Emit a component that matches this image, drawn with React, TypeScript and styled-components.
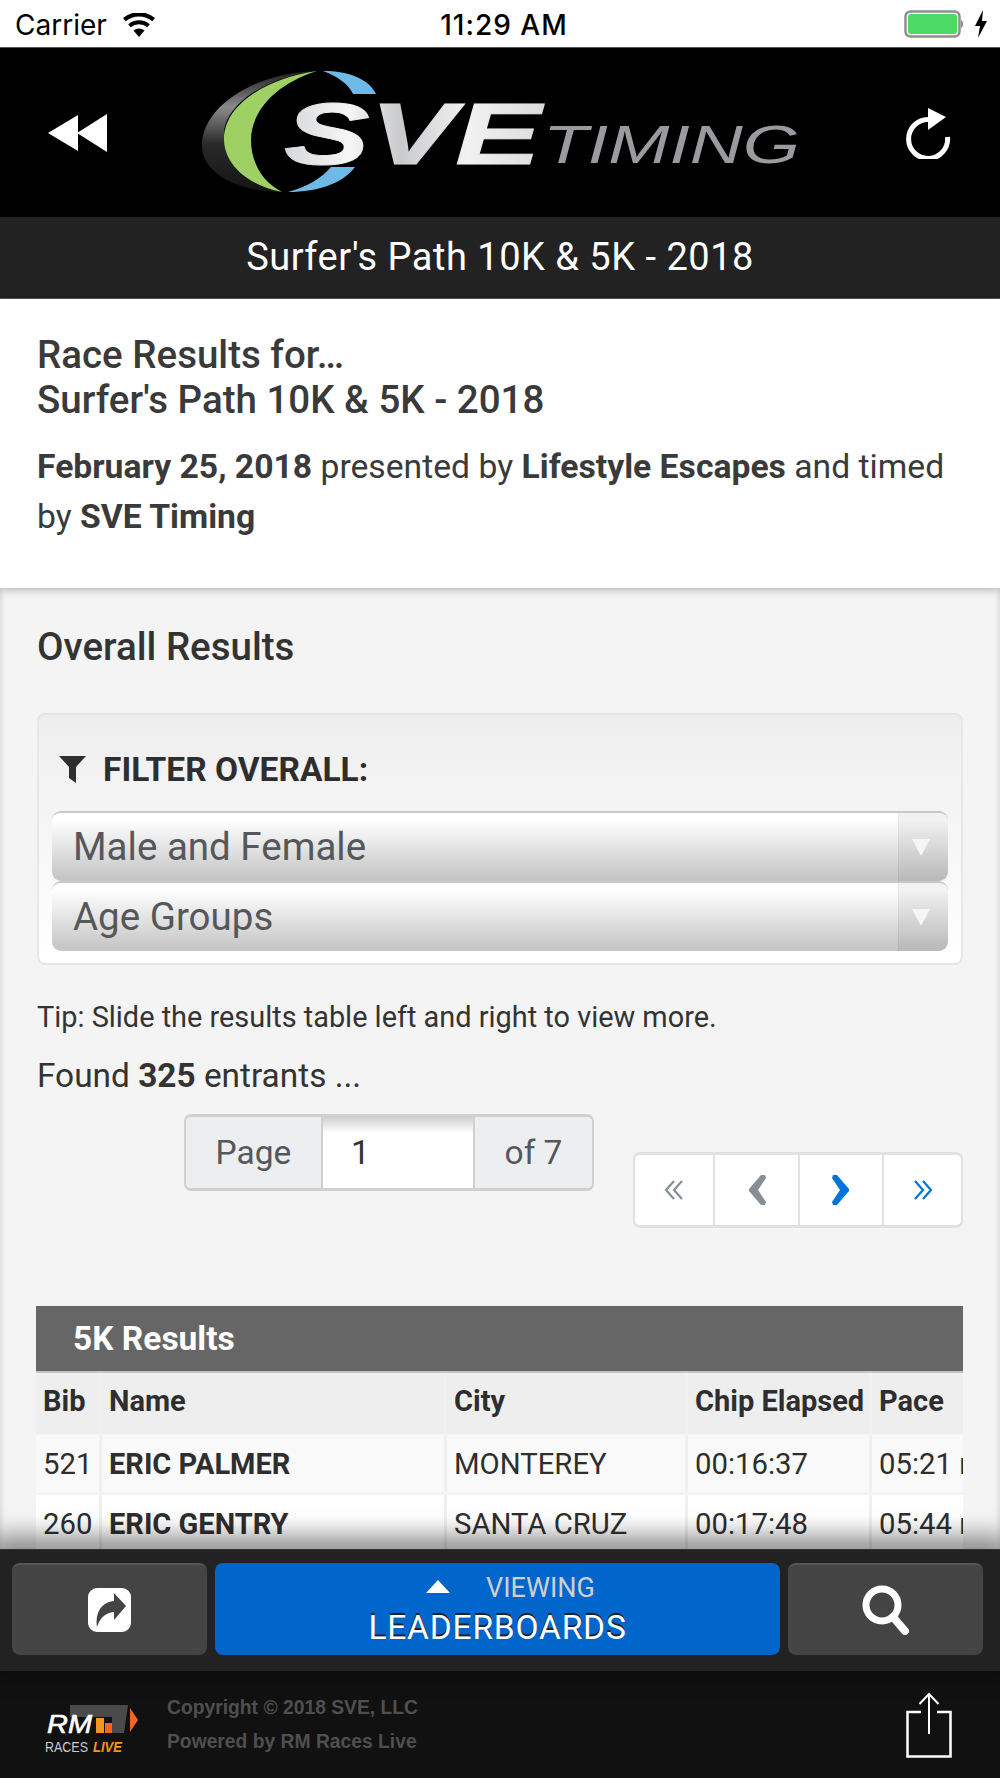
import { FC } from 'react';
import styled, { createGlobalStyle } from 'styled-components';

const GlobalStyle = createGlobalStyle`
  html, body {
    margin: 0;
    padding: 0;
    background: #f4f4f4;
  }
  * {
    box-sizing: border-box;
  }
`;

const Screen = styled.div`
  width: 1000px;
  height: 1778px;
  display: flex;
  flex-direction: column;
  overflow: hidden;
  font-family: Roboto, 'Liberation Sans', sans-serif;
  color: #333;
`;

// status bar
const StatusBar = styled.div`
  height: 48px;
  flex: none;
  display: grid;
  grid-template-columns: 1fr auto 1fr;
  align-items: center;
  padding: 3px 12px 0 15px;
  background: #fff;
  border-bottom: 1px solid #555;
  color: #000;
  font-family: Inter, Roboto, sans-serif;
  font-size: 28px;
  line-height: 30px;
`;

const StatusLeft = styled.div`
  display: flex;
  align-items: center;
  gap: 15px;
`;

const StatusTime = styled.div`
  font-weight: 500;
  letter-spacing: 1px;
  padding-left: 5px;
`;

const StatusRight = styled.div`
  display: flex;
  align-items: center;
  justify-content: flex-end;
  gap: 11px;
  margin-top: -3px;
`;

// header
const Header = styled.div`
  height: 169px;
  flex: none;
  display: flex;
  align-items: center;
  justify-content: space-between;
  padding: 0 48px 0 48px;
  background: #000;
`;

const HeaderLogo = styled.svg`
  margin: 0 15px 2px 0;
`;

const TitleBar = styled.div`
  height: 82px;
  flex: none;
  display: flex;
  align-items: center;
  justify-content: center;
  padding-bottom: 2px;
  background: #222;
  border-bottom: 1px solid #555;
  color: #fff;
  font-size: 38px;
  letter-spacing: 0.5px;
`;

// intro
const Intro = styled.div`
  height: 289px;
  flex: none;
  padding: 33px 37px 0;
  background: #fff;
  box-shadow: 0 2px 8px rgba(0, 0, 0, 0.25);
  position: relative;
`;

const IntroTitle = styled.h1`
  margin: 0;
  font-size: 38.5px;
  line-height: 45px;
  font-weight: 500;
  color: #3a3a3a;
`;

const IntroText = styled.p`
  margin: 20px 0 0;
  font-size: 33.7px;
  line-height: 50px;
  color: #3a3a3a;

  b {
    font-weight: 700;
  }
`;

// main
const Main = styled.div`
  flex: 1;
  min-height: 0;
  overflow: hidden;
  padding: 36px 37px 0 37px;
  background: #f4f4f4;
  box-shadow: inset 4px 0 4px -2px rgba(0, 0, 0, 0.1), inset -4px 0 4px -2px rgba(0, 0, 0, 0.1);
`;

const SectionTitle = styled.h2`
  margin: 0;
  font-size: 38.5px;
  line-height: 46px;
  font-weight: 500;
  color: #333;
`;

const FilterPanel = styled.div`
  margin-top: 43px;
  height: 252px;
  padding: 34px 13px 0;
  border: 2px solid #e6e6e6;
  border-radius: 8px;
  background: linear-gradient(#eeeeee, #ffffff);
`;

const FilterLabel = styled.div`
  display: flex;
  align-items: center;
  gap: 17px;
  padding-left: 7px;
  height: 40px;
  font-size: 33.5px;
  font-weight: 700;
  color: #2e2e2e;
`;

const SelectList = styled.div`
  margin-top: 22px;
  display: flex;
  flex-direction: column;
`;

const SelectBox = styled.div`
  height: 70px;
  display: flex;
  align-items: stretch;
  border-top: 2px solid #c8c8c8;
  border-radius: 9px;
  background: linear-gradient(#ffffff 10%, #c6c6c6 95%);
  overflow: hidden;
`;

const SelectValue = styled.div`
  flex: 1;
  padding: 0 0 2px 21px;
  display: flex;
  align-items: center;
  font-size: 38.5px;
  color: #55585b;
`;

const SelectCaret = styled.div`
  width: 50px;
  display: flex;
  align-items: center;
  justify-content: center;
  padding-right: 6px;
  background: rgba(0, 0, 0, 0.05);
  border-left: 1px solid rgba(0, 0, 0, 0.04);

  &::after {
    content: '';
    border-left: 9px solid transparent;
    border-right: 9px solid transparent;
    border-top: 17px solid #f6f6f6;
  }
`;

const Tip = styled.div`
  margin-top: 34px;
  font-size: 28.9px;
  line-height: 36px;
  color: #333;
`;

const Found = styled.div`
  margin-top: 21px;
  font-size: 33.4px;
  line-height: 40px;
  color: #333;

  b {
    font-weight: 700;
  }
`;

const PagingRow = styled.div`
  margin-top: 18px;
  display: flex;
  justify-content: flex-end;
  gap: 39px;
`;

const PageGroup = styled.div`
  width: 410px;
  height: 77px;
  display: flex;
  border: 2px solid #ced0d2;
  border-top-width: 3px;
  border-bottom-width: 3px;
  border-radius: 7px;
  overflow: hidden;
`;

const PageLabel = styled.div<{ $width: number }>`
  width: ${({ $width }) => $width}px;
  flex: none;
  display: flex;
  align-items: center;
  justify-content: center;
  padding-bottom: 1px;
  background: #eceef0;
  font-size: 33.5px;
  color: #55585b;
`;

const PageInput = styled.div`
  flex: 1;
  display: flex;
  align-items: center;
  padding: 0 0 1px 28px;
  background: linear-gradient(#cfcfcf, #ffffff 22%);
  border-left: 2px solid #ced0d2;
  border-right: 2px solid #ced0d2;
  font-size: 33.5px;
  color: #333;
`;

const Pager = styled.div`
  margin-top: 38px;
  width: 330px;
  height: 76px;
  display: grid;
  grid-template-columns: 78px 85px 84px 1fr;
  background: #fff;
  border: 2px solid #dfe1e3;
  border-top-width: 3px;
  border-bottom-width: 3px;
  border-radius: 7px;
`;

const PagerCell = styled.div`
  display: flex;
  align-items: center;
  justify-content: center;

  & + & {
    border-left: 2px solid #dfe1e3;
  }
`;

const ResultsHead = styled.div`
  margin: 78px 0 0 -1px;
  height: 67px;
  display: flex;
  align-items: center;
  padding-left: 37px;
  background: #666;
  border-bottom: 2px solid #c4c4c4;
  color: #fff;
  font-size: 33.5px;
  font-weight: 700;
`;

const TableWrap = styled.div`
  margin-left: -1px;
  overflow: hidden;
`;

const Row = styled.div<{ $bg: string; $height: number }>`
  display: grid;
  grid-template-columns: 66px 345px 241px 184px 200px;
  width: 1036px;
  height: ${({ $height }) => $height}px;
  background: ${({ $bg }) => $bg};
  margin-bottom: 3px;
`;

const HeadRow = styled(Row)`
  margin-bottom: 1px;
`;

const Cell = styled.div<{ $strong?: boolean }>`
  display: flex;
  align-items: center;
  padding-left: 7px;
  white-space: nowrap;
  font-size: ${({ $strong }) => ($strong ? 29 : 29.3)}px;
  font-weight: ${({ $strong }) => ($strong ? 700 : 400)};
  color: #2e2e2e;
  border-right: 3px solid #eef0f1;
`;

const HeadCell = styled(Cell)`
  font-size: 29px;
  font-weight: 700;
  padding-bottom: 5px;
`;

// bottom
const ActionBar = styled.div`
  height: 122px;
  flex: none;
  display: flex;
  gap: 8px;
  padding: 13px 17px 16px 12px;
  background: #222;
  border-top: 1px solid #333;
  box-shadow: 0 -6px 22px 8px rgba(0, 0, 0, 0.42);
  position: relative;
`;

const SideButton = styled.div`
  width: 195px;
  flex: none;
  display: flex;
  align-items: center;
  justify-content: center;
  background: #444;
  border-top: 2px solid #555;
  border-radius: 8px;
`;

const MainButton = styled.div`
  flex: 1;
  display: flex;
  flex-direction: column;
  align-items: center;
  justify-content: center;
  background: #0066cc;
  border-radius: 8px;
  color: #fff;
`;

const ViewingLine = styled.div`
  display: flex;
  align-items: center;
  gap: 36px;
  padding-left: 26px;
  height: 38px;
  font-size: 27px;
  color: #cfcfcf;
`;

const UpTriangle = styled.span`
  border-left: 12px solid transparent;
  border-right: 12px solid transparent;
  border-bottom: 13px solid #fff;
  margin-bottom: 4px;
`;

const LeaderLine = styled.div`
  font-size: 33.5px;
  line-height: 42px;
  letter-spacing: 0.8px;
  text-shadow: 0 -2px 0 #222;
`;

const Footer = styled.div`
  height: 107px;
  flex: none;
  display: flex;
  align-items: center;
  padding: 0 48px 0 45px;
  background: #111;
`;

const FooterLogo = styled.svg`
  margin-top: 8px;
  flex: none;
`;

const FooterCopy = styled.div`
  margin-left: 28px;
  flex: 1;
  font-family: 'Liberation Sans', Arial, sans-serif;
  font-size: 19.3px;
  font-weight: 700;
  line-height: 34px;
  color: #4f4f4f;
`;

const Chevrons: FC<{ color: string; double?: boolean; flip?: boolean }> = ({ color, double, flip }) => (
  <svg width={double ? 22 : 24} height={double ? 22 : 32} viewBox={double ? '0 0 22 22' : '0 0 24 32'} style={flip ? { transform: 'scaleX(-1)' } : undefined}>
    {double ? (
      <g fill="none" stroke={color} strokeWidth="2.2">
        <path d="M11 2 3 11l8 9" />
        <path d="M19 2l-8 9 8 9" />
      </g>
    ) : (
      <path d="M16 1h4l1 3-8 12 8 12-1 3h-4L4 17v-2z" fill={color} />
    )}
  </svg>
);

const rows = [
  { bib: '521', name: 'ERIC PALMER', city: 'MONTEREY', time: '00:16:37', pace: '05:21 min/mi', bg: '#f9f9f9', h: 57 },
  { bib: '260', name: 'ERIC GENTRY', city: 'SANTA CRUZ', time: '00:17:48', pace: '05:44 min/mi', bg: '#ffffff', h: 57 },
];

export default function App() {
  return (
    <Screen>
      <GlobalStyle />
      <StatusBar>
        <StatusLeft>
          <span>Carrier</span>
          <svg width="34" height="24" viewBox="0 0 34 24">
            <path d="M17 24 11.5 17.5a8.5 8.5 0 0 1 11 0z" fill="#000" />
            <path d="M8.8 14.3a12.8 12.8 0 0 1 16.4 0l2.6-3.1a17 17 0 0 0-21.600 0z" fill="#000" />
            <path d="M3.700 8.200a20.800 20.800 0 0 1 26.600 0L33 5A25 25 0 0 0 1 5z" fill="#000" />
          </svg>
        </StatusLeft>
        <StatusTime>11:29 AM</StatusTime>
        <StatusRight>
          <svg width="59" height="28" viewBox="0 0 59 28">
            <rect x="1.500" y="1.500" width="54" height="25" rx="5" fill="none" stroke="#8e8e8e" strokeWidth="2.500" />
            <rect x="4" y="4" width="49" height="20" rx="3" fill="#4cd964" />
            <path d="M57 10c1.500.5 2 2 2 4s-.5 3.500-2 4z" fill="#8e8e8e" />
          </svg>
          <svg width="14" height="28" viewBox="0 0 14 28">
            <path d="M9 0 1 16h5l-2 12 9-17H8z" fill="#000" />
          </svg>
        </StatusRight>
      </StatusBar>

      <Header>
        <svg width="60" height="38" viewBox="0 0 60 38">
          <path d="M0 19 30 1v36zM29 19 59 0v38z" fill="#fff" />
        </svg>
        <HeaderLogo width="604" height="126" viewBox="198 70 604 126">
          <defs>
            <linearGradient id="ringDark" x1="0" y1="0" x2="0" y2="1">
              <stop offset="0" stopColor="#1c1c1c" />
              <stop offset="0.3" stopColor="#8b8b8d" />
              <stop offset="0.6" stopColor="#2a2a2a" />
              <stop offset="1" stopColor="#141414" />
            </linearGradient>
            <linearGradient id="sveFill" x1="0" y1="0" x2="1" y2="0">
              <stop offset="0" stopColor="#d6d7d9" />
              <stop offset="0.25" stopColor="#f6f6f6" />
              <stop offset="0.45" stopColor="#c9cacc" />
              <stop offset="0.7" stopColor="#f2f2f2" />
              <stop offset="1" stopColor="#dcdcdd" />
            </linearGradient>
          </defs>
          <path d="M317 72C250 74 202 110 202 146c0 26 30 46 80 47-34-8-58-30-58-58 0-26 36-56 93-63z" fill="url(#ringDark)" />
          <path d="M317 72C262 80 224 108 224 140c0 24 22 46 58 53-20-10-31-30-31-52 0-28 24-56 66-69z" fill="#9ed063" />
          <path d="M323 72c26 0 46 8 53 23h-23c-4-9-14-17-30-23z" fill="#6fb9e6" />
          <path d="M331 168h24c-12 16-36 25-67 25 18-5 33-13 43-25z" fill="#6fb9e6" />
          <text x="284" y="165" fontFamily="'Liberation Sans', Arial, sans-serif" fontSize="88" fontWeight="700" fontStyle="italic" fill="url(#sveFill)" stroke="url(#sveFill)" strokeWidth="1" textLength="257" lengthAdjust="spacingAndGlyphs">SVE</text>
          <text x="543" y="164" fontFamily="'Liberation Sans', Arial, sans-serif" fontSize="53" fontStyle="italic" fill="#9a9b9f" textLength="257" lengthAdjust="spacingAndGlyphs">TIMING</text>
        </HeaderLogo>
        <svg width="46" height="52" viewBox="0 0 46 52">
          <path d="M23 12.500A19.500 19.500 0 1 0 41.500 30" fill="none" stroke="#fff" strokeWidth="5" />
          <path d="M22 1 40 10 22 23z" fill="#fff" />
        </svg>
      </Header>

      <TitleBar>Surfer's Path 10K &amp; 5K - 2018</TitleBar>

      <Intro>
        <IntroTitle>
          Race Results for…
          <br />
          Surfer's Path 10K &amp; 5K - 2018
        </IntroTitle>
        <IntroText>
          <b>February 25, 2018</b> presented by <b>Lifestyle Escapes</b> and timed by <b>SVE Timing</b>
        </IntroText>
      </Intro>

      <Main>
        <SectionTitle>Overall Results</SectionTitle>
        <FilterPanel>
          <FilterLabel>
            <svg width="27" height="27" viewBox="0 0 27 27">
              <path d="M0 0h27L17 11v16l-7-5V11z" fill="#2e2e2e" />
            </svg>
            FILTER OVERALL:
          </FilterLabel>
          <SelectList>
            <SelectBox>
              <SelectValue>Male and Female</SelectValue>
              <SelectCaret />
            </SelectBox>
            <SelectBox>
              <SelectValue>Age Groups</SelectValue>
              <SelectCaret />
            </SelectBox>
          </SelectList>
        </FilterPanel>

        <Tip>Tip: Slide the results table left and right to view more.</Tip>
        <Found>
          Found <b>325</b> entrants ...
        </Found>

        <PagingRow>
          <PageGroup>
            <PageLabel $width={135}>Page</PageLabel>
            <PageInput>1</PageInput>
            <PageLabel $width={117}>of 7</PageLabel>
          </PageGroup>
          <Pager>
            <PagerCell>
              <Chevrons color="#868e96" double />
            </PagerCell>
            <PagerCell>
              <Chevrons color="#868e96" />
            </PagerCell>
            <PagerCell>
              <Chevrons color="#0074d9" flip />
            </PagerCell>
            <PagerCell>
              <Chevrons color="#0074d9" double flip />
            </PagerCell>
          </Pager>
        </PagingRow>

        <ResultsHead>5K Results</ResultsHead>
        <TableWrap>
          <HeadRow $bg="#eeeeee" $height={61}>
            <HeadCell>Bib</HeadCell>
            <HeadCell>Name</HeadCell>
            <HeadCell>City</HeadCell>
            <HeadCell>Chip Elapsed</HeadCell>
            <HeadCell>Pace</HeadCell>
          </HeadRow>
          {rows.map((r) => (
            <Row key={r.bib} $bg={r.bg} $height={r.h}>
              <Cell>{r.bib}</Cell>
              <Cell $strong>{r.name}</Cell>
              <Cell>{r.city}</Cell>
              <Cell>{r.time}</Cell>
              <Cell>{r.pace}</Cell>
            </Row>
          ))}
        </TableWrap>
      </Main>

      <ActionBar>
        <SideButton>
          <svg width="43" height="44" viewBox="0 0 43 44">
            <path
              fillRule="evenodd"
              d="M9 0h25a9 9 0 0 1 9 9v26a9 9 0 0 1-9 9H9a9 9 0 0 1-9-9V9a9 9 0 0 1 9-9zM26 5v8C14 14 7 24 9 39c3-9 8-14 17-15v8l12-14z"
              fill="#fff"
            />
          </svg>
        </SideButton>
        <MainButton>
          <ViewingLine>
            <UpTriangle />
            VIEWING
          </ViewingLine>
          <LeaderLine>LEADERBOARDS</LeaderLine>
        </MainButton>
        <SideButton>
          <svg width="48" height="50" viewBox="0 0 48 50">
            <circle cx="20" cy="20" r="16" fill="none" stroke="#fff" strokeWidth="7" />
            <path d="M31 32l12 14" stroke="#fff" strokeWidth="8" strokeLinecap="round" />
          </svg>
        </SideButton>
      </ActionBar>

      <Footer>
        <FooterLogo width="94" height="48" viewBox="0 0 94 48">
          <path d="M25 0h58l-4 28H67V12H25z" fill="#4a4a4a" />
          <rect x="51" y="13" width="8" height="15" fill="#f7941d" />
          <rect x="60" y="18" width="7" height="10" fill="#f26522" />
          <path d="M85 3l8 12-8 12z" fill="#f26522" />
          <text x="2" y="28" fontFamily="'Liberation Sans', Arial, sans-serif" fontSize="25" fontStyle="italic" fill="#fff" stroke="#fff" strokeWidth="0.6" textLength="45" lengthAdjust="spacingAndGlyphs">RM</text>
          <text x="0" y="47" fontFamily="'Liberation Sans', Arial, sans-serif" fontSize="15" fill="#cccccc" textLength="43" lengthAdjust="spacingAndGlyphs">RACES</text>
          <text x="48" y="47" fontFamily="'Liberation Sans', Arial, sans-serif" fontSize="15" fontWeight="700" fontStyle="italic" fill="#f7941d" textLength="29" lengthAdjust="spacingAndGlyphs">LIVE</text>
        </FooterLogo>
        <FooterCopy>
          Copyright © 2018 SVE, LLC
          <br />
          Powered by RM Races Live
        </FooterCopy>
        <svg width="46" height="66" viewBox="0 0 46 66">
          <path d="M15 20H1.500v44.500h43V20H31" fill="none" stroke="#fff" strokeWidth="2.500" />
          <path d="M23 42V2M13.500 12 23 2l9.500 10" fill="none" stroke="#fff" strokeWidth="2" />
        </svg>
      </Footer>
    </Screen>
  );
}
